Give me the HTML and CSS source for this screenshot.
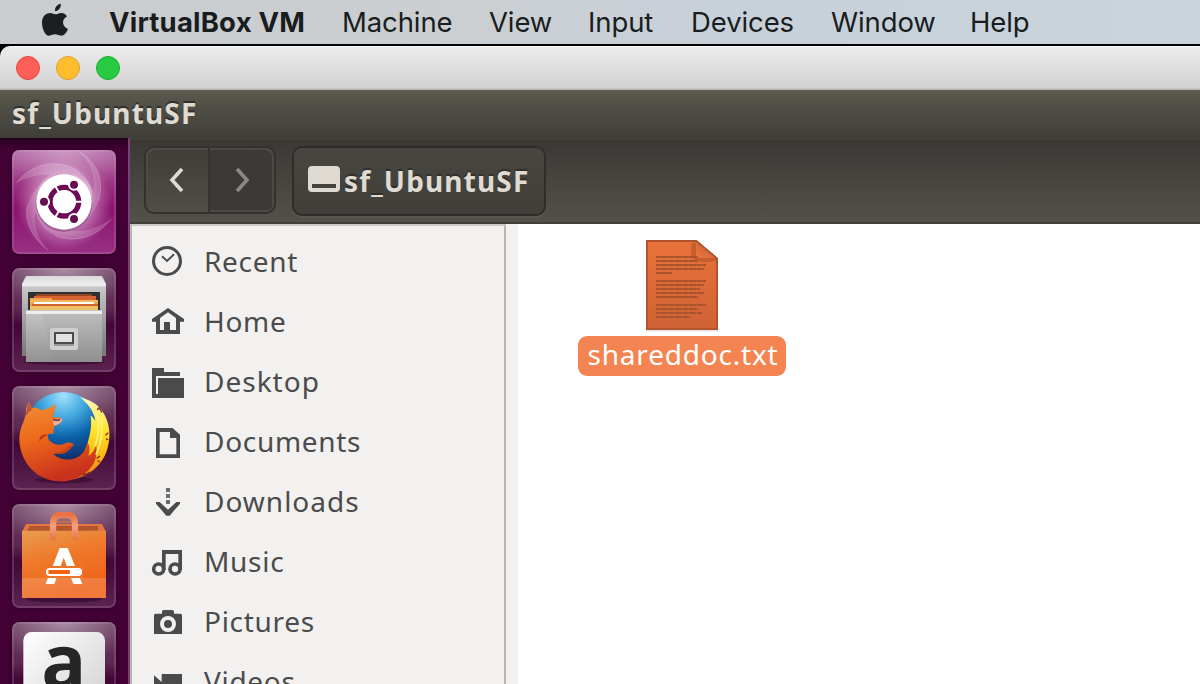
FILE: index.html
```html
<!DOCTYPE html>
<html lang="en">
<head>
<meta charset="utf-8">
<title>sf_UbuntuSF</title>
<link rel="stylesheet" href="styles.css">
</head>
<body>
<header class="menubar">
  <svg class="apple" viewBox="120 9 90 102"><path d="M165 33C164 22 171 13 182 11C184 22 176 33 165 33ZM201 49C191 55 187 63 190 73C192 80 197 84 204 87C200 98 192 107 184 107C177 107 173 103 165 103C157 103 153 107 147 107C135 107 126 85 126 68C126 50 137 39 150 39C157 39 161 43 167 43C172 43 177 38 185 39C192 39 197 43 201 49Z"/></svg>
  <span class="menu app">VirtualBox VM</span>
  <span class="menu">Machine</span>
  <span class="menu">View</span>
  <span class="menu">Input</span>
  <span class="menu">Devices</span>
  <span class="menu">Window</span>
  <span class="menu">Help</span>
</header>
<div class="vm">
  <div class="titlebar"><i class="light red"></i><i class="light amber"></i><i class="light green"></i></div>
  <div class="panel"><span class="bold-title">sf_UbuntuSF</span></div>
  <div class="desktop">
    <nav class="launcher">
      <div class="tile dash">
        <svg viewBox="36 42 312 312">
          <defs>
            <linearGradient id="sw" x1="0" y1="0" x2="1" y2="1"><stop offset="0" stop-color="#fff" stop-opacity=".1"/><stop offset="1" stop-color="#fff" stop-opacity=".36"/></linearGradient>
            <radialGradient id="halo"><stop offset=".4" stop-color="#e9c4e2" stop-opacity=".8"/><stop offset="1" stop-color="#d89acb" stop-opacity="0"/></radialGradient>
          </defs>
          <circle cx="192" cy="198" r="145" fill="url(#halo)"/>
          <path d="M50 140C100 75 185 70 235 105C270 130 280 160 276 200L110 200C105 170 120 130 150 118C115 112 80 125 50 140Z" fill="url(#sw)"/>
          <path d="M235 46C290 75 315 135 295 195C282 235 250 275 210 282L190 116C230 110 270 135 280 165C286 120 270 75 235 46Z" fill="#fff" fill-opacity=".16"/>
          <path d="M334 248C295 300 225 325 165 298C120 278 100 235 112 190L270 220C265 255 240 280 215 285C260 290 300 270 334 248Z" fill="#fff" fill-opacity=".16"/>
          <path d="M145 344C95 305 70 250 84 205C92 175 115 145 145 125L165 280C135 272 112 250 106 225C100 270 115 310 145 344Z" fill="#fff" fill-opacity=".16"/>
          <g fill="none" stroke="#efcbe8" stroke-opacity=".3" stroke-width="3"><path d="M50 140C100 75 185 70 235 105"/><path d="M235 46C290 75 315 135 295 195"/><path d="M334 248C295 300 225 325 165 298"/><path d="M145 344C95 305 70 250 84 205"/></g>
          <circle cx="192" cy="203" r="85" fill="#5b0b4f" opacity=".35"/>
          <circle cx="192" cy="198" r="83" fill="#fff"/>
          <circle cx="193" cy="197" r="43" fill="none" stroke="#6d0b55" stroke-width="16"/>
          <g stroke="#fff" stroke-width="6"><path d="M193 197L251 197M193 197L164 147M193 197L164 247"/></g>
          <circle cx="193" cy="197" r="34" fill="#fff"/>
          <g fill="#65104f" stroke="#fff" stroke-width="6"><circle cx="132" cy="197" r="15"/><circle cx="222" cy="146" r="15"/><circle cx="222" cy="249" r="15"/></g>
        </svg>
      </div>
      <div class="tile">
        <svg viewBox="36 36 312 312">
          <defs>
            <linearGradient id="cab" x1="0" y1="0" x2="0" y2="1"><stop offset="0" stop-color="#c9c9c9"/><stop offset="1" stop-color="#777"/></linearGradient>
            <linearGradient id="drawer" x1="0" y1="0" x2="0" y2="1"><stop offset="0" stop-color="#c6c6c6"/><stop offset="1" stop-color="#929292"/></linearGradient>
            <linearGradient id="lid" x1="0" y1="0" x2="0" y2="1"><stop offset="0" stop-color="#d9d9d9"/><stop offset="1" stop-color="#f2f2f2"/></linearGradient>
          </defs>
          <ellipse cx="192" cy="318" rx="120" ry="9" fill="#25001f" opacity=".45"/>
          <path d="M66 88H318V300H66Z" fill="url(#cab)"/>
          <path d="M78 60H306L318 84V91H66V84Z" fill="url(#lid)"/>
          <path d="M84 108H300V164H84Z" fill="#303030"/>
          <path d="M108 114H276V124H108Z" fill="#944623"/>
          <path d="M102 120H288V164H102Z" fill="#d76333"/>
          <path d="M90 126H156V132H294V162H90Z" fill="#eda64a"/>
          <path d="M90 132H294V138H90Z" fill="#f6b95e"/><path d="M102 138H282V144H102Z" fill="#fff"/>
          <path d="M96 144H294V150H96Z" fill="#d0622c"/><path d="M90 150H294V162H90Z" fill="#f0bd69"/>
          <path d="M78 162H306V318H78Z" fill="url(#drawer)"/><path d="M78 165H306V174H78Z" fill="#eee"/>
          <path d="M126 174L165 318H306V174Z" fill="#777" opacity=".09"/>
          <rect x="150" y="216" width="84" height="66" rx="8" fill="#cfcfcf"/>
          <rect x="162" y="228" width="60" height="36" fill="#4b4b4b"/><rect x="162" y="264" width="60" height="6" fill="#999"/>
          <rect x="168" y="234" width="48" height="24" fill="#e3e3e3"/>
        </svg>
      </div>
      <div class="tile">
        <svg viewBox="36 30 312 312">
          <defs>
            <radialGradient id="globe" cx=".5" cy=".05" r=".86"><stop offset="0" stop-color="#a2e2fb"/><stop offset=".3" stop-color="#48ace2"/><stop offset=".62" stop-color="#0a62a9"/><stop offset="1" stop-color="#15245c"/></radialGradient>
            <linearGradient id="fox" x1="0" y1="0" x2=".3" y2="1"><stop offset="0" stop-color="#f39235"/><stop offset=".5" stop-color="#ec671b"/><stop offset="1" stop-color="#c9321c"/></linearGradient>
            <linearGradient id="tail" x1="0" y1="0" x2="0" y2="1"><stop offset="0" stop-color="#fff8c0"/><stop offset=".4" stop-color="#ffe32c"/><stop offset=".7" stop-color="#fdb813"/><stop offset="1" stop-color="#ee7219"/></linearGradient>
          </defs>
          <ellipse cx="192" cy="312" rx="90" ry="10" fill="#25001f" opacity=".4"/>
          <circle cx="190" cy="166" r="118" fill="url(#globe)"/>
          <path d="M240 64C272 72 294 86 307 106C329 137 335 182 321 222C304 274 260 302 220 310C232 278 248 245 258 214C272 177 276 147 272 119C279 123 283 129 286 136C283 106 262 82 240 64Z" fill="url(#tail)"/>
          <path d="M86 77L95 97C106 92 114 95 123 103C134 99 149 98 168 84C164 98 165 111 158 124C166 123 178 123 187 128C184 141 174 146 162 151L160 174C144 172 141 176 146 191C156 202 171 209 190 205C200 198 214 197 222 207C213 211 207 216 201 222C191 232 177 233 160 234C180 253 211 256 235 242C251 233 259 217 262 199C270 210 270 227 265 240C277 232 284 221 288 206C293 229 288 254 276 270C252 304 208 319 175 316C130 314 91 288 71 246C55 212 53 172 70 139C74 127 76 120 78 112C76 100 81 89 86 77Z" fill="url(#fox)"/>
          <path d="M158 132C171 126 180 127 187 130C184 141 174 146 162 149Z" fill="#f6b49a"/>
          <path d="M160 130Q170 136 180 130" fill="none" stroke="#7b3943" stroke-width="6"/>
          <path d="M118 197C117 178 130 172 144 177C128 184 122 191 118 197Z" fill="#b83b18"/>
          <path d="M143 222C177 236 190 227 203 211L222 206C208 222 199 233 179 234Z" fill="#cc431a"/>
          <path d="M288 105C300 132 298 177 285 211M304 128C309 165 303 204 288 236" fill="none" stroke="#fff47b" stroke-width="5"/>
          <path d="M79 108L85 78L96 102C87 106 83 112 79 121Z" fill="#bd5436"/>
          <path d="M292 102l5-7 9 14M316 178l9-8M318 188l7 4M290 247l10-7M292 254l8 4M251 300l18-12M257 293l-10 3" fill="none" stroke="#84321f" stroke-width="4"/>
        </svg>
      </div>
      <div class="tile">
        <svg viewBox="36 24 312 312">
          <defs>
            <linearGradient id="bag" x1="0" y1="0" x2=".35" y2="1"><stop offset="0" stop-color="#e99c50"/><stop offset=".45" stop-color="#ef7a2c"/><stop offset="1" stop-color="#ef6116"/></linearGradient>
            <linearGradient id="handle" x1="0" y1="0" x2="0" y2="1"><stop offset="0" stop-color="#ea7345"/><stop offset=".45" stop-color="#f3a17d"/><stop offset="1" stop-color="#e8743e"/></linearGradient>
          </defs>
          <ellipse cx="192" cy="308" rx="115" ry="12" fill="#21001c" opacity=".45"/>
          <path d="M78 84H306L318 108H66Z" fill="#e57540"/><path d="M90 90H294V108H78Z" fill="#b3562f"/>
          <path d="M66 104H318V306H66Z" fill="url(#bag)"/>
          <path d="M66 246H318V306H66Z" fill="#fff" opacity=".16"/>
          <path d="M159 132V84Q161 57 180 57H204Q223 57 225 84V132" fill="none" stroke="url(#handle)" stroke-width="19"/>
          <path d="M171 78H213" stroke="#db6d43" stroke-width="5"/>
          <path d="M179 156H203L247 264H220L191 185L163 264H137Z" fill="#fff"/>
          <path d="M132 210H249V246H132Z" fill="#ee7426"/>
          <rect x="138" y="216" width="108" height="24" rx="11" fill="#fff"/><rect x="145" y="222" width="65" height="12" rx="3" fill="#f36412"/>
        </svg>
      </div>
      <div class="tile">
        <svg viewBox="36 378 312 312">
          <defs><linearGradient id="paper" x1="0" y1="0" x2="1" y2="1"><stop offset="0" stop-color="#fff"/><stop offset="1" stop-color="#cfcfcf"/></linearGradient></defs>
          <rect x="70" y="408" width="245" height="250" rx="25" fill="url(#paper)"/>
          <text class="amazon" x="124" y="578">a</text>
        </svg>
      </div>
    </nav>
    <main class="files">
      <div class="toolbar">
        <div class="history">
          <span class="back"><svg viewBox="0 0 24 28"><path d="M17 3L7 14L17 25"/></svg></span>
          <span class="forward"><svg viewBox="0 0 24 28"><path d="M7 3L17 14L7 25"/></svg></span>
        </div>
        <div class="location">
          <svg viewBox="0 0 32 26"><path fill-rule="evenodd" d="M4 0H28Q32 0 32 4V22Q32 26 28 26H4Q0 26 0 22V4Q0 0 4 0ZM4 18V22H28V18Z"/></svg>
          <span class="bold-title">sf_UbuntuSF</span>
        </div>
      </div>
      <div class="content">
        <aside class="places">
          <div class="place"><svg viewBox="75 42 108 108"><circle cx="126" cy="93" r="40.5" fill="none" stroke="#4b4b4b" stroke-width="9"/><path d="M111 79L126 93L147 73" fill="none" stroke="#4b4b4b" stroke-width="6"/></svg><span>Recent</span></div>
          <div class="place"><svg viewBox="75 222 108 108"><path fill-rule="evenodd" d="M129 234L177 267V275H165V312H93V275H81V267ZM129 247L105 264V300H117V276H135V300H153V264Z"/></svg><span>Home</span></div>
          <div class="place wide"><svg viewBox="75 402 108 108"><path d="M81 414H117V426H165V438H93V492H99V444H177V504H81Z"/></svg><span>Desktop</span></div>
          <div class="place"><svg viewBox="75 582 108 108"><path fill-rule="evenodd" d="M93 594H143L165 614V684H93ZM104 606V673H154V624H135V606Z"/></svg><span>Documents</span></div>
          <div class="place wide"><svg viewBox="75 72 108 108"><path d="M123 84H135V96H123ZM123 102H135V114H123ZM123 120H135V132H123Z" opacity=".8"/><path d="M93 126H104L129 149L154 126H165V131L134 167H124L93 131Z"/></svg><span>Downloads</span></div>
          <div class="place"><svg viewBox="75 252 108 108"><path d="M111 270H171V330H160V282H122V330H111Z"/><circle cx="101" cy="327" r="15" fill="none" stroke="#4b4b4b" stroke-width="11"/><circle cx="150" cy="327" r="15" fill="none" stroke="#4b4b4b" stroke-width="11"/></svg><span>Music</span></div>
          <div class="place"><svg viewBox="75 432 108 108"><path d="M111 455Q111 450 116 450H142Q147 450 147 455V461H166Q171 461 171 466V522H87V466Q87 461 92 461H111Z"/><circle cx="129" cy="492" r="18" fill="none" stroke="#f2f1ef" stroke-width="12"/></svg><span>Pictures</span></div>
          <div class="place"><svg viewBox="75 612 108 108"><path d="M87 646L110 666V642H171V700H110V681L87 700Z"/></svg><span>Videos</span></div>
        </aside>
        <section class="listing">
          <div class="file">
            <svg viewBox="216 48 240 300">
              <defs>
                <linearGradient id="doc" x1="0" y1="0" x2="0" y2="1"><stop offset="0" stop-color="#e9723a"/><stop offset="1" stop-color="#cf6335"/></linearGradient>
                <linearGradient id="fold" x1="0" y1="1" x2=".7" y2=".2"><stop offset="0" stop-color="#f07b42"/><stop offset="1" stop-color="#c65e32"/></linearGradient>
              </defs>
              <path d="M228 332H444" stroke="#000" stroke-opacity=".1" stroke-width="5"/>
              <path d="M231 63H378L441 116V327H231Z" fill="url(#doc)" stroke="#b3532c" stroke-width="6"/>
              <path d="M364 68H378V114H438V124Q385 132 364 112Z" fill="#944522" opacity=".4"/>
              <path d="M378 63L441 116Q409 106 378 115Q382 87 378 63Z" fill="url(#fold)"/>
              <path d="M378 62L441 115" stroke="#a95531" stroke-width="5"/>
              <path d="M258 111H384M258 123H384M258 135H408M258 147H402M258 159H306M258 183H408M258 195H402M258 207H390M258 219H402M258 231H384M258 255H408M258 267H384M258 279H396M258 291H360" stroke="#a9532c" stroke-width="6"/>
              <path d="M258 111H384M258 123H384M258 135H408M258 147H402M258 159H306M258 183H408M258 195H402M258 207H390M258 219H402M258 231H384M258 255H408M258 267H384M258 279H396M258 291H360" stroke="#bd5d32" stroke-width="6" stroke-dasharray="3 21 3 15" stroke-dashoffset="-12"/>
            </svg>
            <span class="label">shareddoc.txt</span>
          </div>
        </section>
      </div>
    </main>
  </div>
</div>
</body>
</html>
```

FILE: styles.css
```css
* { box-sizing: border-box; }
body { margin: 0; width: 1200px; height: 684px; overflow: hidden; display: flex; flex-direction: column; background: #000; font-family: "Noto Sans", sans-serif; }
svg { display: block; flex: none; }
.menubar { flex: none; height: 46px; display: grid; grid-template-columns: 69px 233px 147px 99px 103px 140px 139px 1fr; padding-left: 40px; align-items: center; border-bottom: 2px solid #000; background: linear-gradient(90deg, #cacccf, #cbcfd2 40%, #c8d0d9 60%, #c9d4dc); font: 27.5px/44px Inter, sans-serif; color: #191d20; white-space: nowrap; }
.apple { width: 30px; height: 34px; margin-bottom: 4px; fill: #1b1f21; }
.menu { letter-spacing: -0.1px; }
.menu.app { font-weight: 700; letter-spacing: 0.2px; }
.vm { flex: 1; min-height: 0; display: flex; flex-direction: column; overflow: hidden; border-top-left-radius: 10px; }
.titlebar { flex: none; height: 44px; display: flex; align-items: center; gap: 16px; padding-left: 16px; background: linear-gradient(#f6f6f6, #ebebeb 2px, #d2d2d2 42px, #b5b5b1 43px); }
.light { width: 24px; height: 24px; border-radius: 50%; border: 1px solid; }
.red { background: #ff5f57; border-color: #e2463f; }
.amber { background: #ffbd2e; border-color: #dfa023; }
.green { background: #28ca42; border-color: #1dad2b; }
.panel { flex: none; height: 48px; padding-left: 12px; background: linear-gradient(#5e5c4f, #55534a 20%, #3f3e39); }
.bold-title { display: block; margin-top: -1px; font-weight: 700; font-size: 28px; line-height: 48px; letter-spacing: 1.15px; color: #dfdbd2; text-shadow: 0 -2px #302f2b; white-space: nowrap; }
.desktop { flex: 1; min-height: 0; display: flex; }
.launcher { flex: none; width: 130px; padding: 12px 0 0 12px; display: flex; flex-direction: column; gap: 14px; border-right: 2px solid #7c4173; background: linear-gradient(#27001f, #430035 12px); }
.tile { flex: none; width: 104px; height: 104px; border-radius: 7px; background: radial-gradient(ellipse 65% 40% at 50% 0, rgba(255,255,255,.4), transparent), linear-gradient(#704365, #5c2751 40%, #410735 55%, #5c2450); box-shadow: inset 0 0 0 2px rgba(220,170,210,.2), 0 0 4px #2b0023; }
.tile.dash { background: radial-gradient(ellipse 65% 40% at 50% 0, rgba(255,255,255,.35), transparent), linear-gradient(#b266a4, #9a307f 35%, #8a136e 55%, #983184); }
.tile svg { width: 104px; height: 104px; }
.amazon { font: 700 224px "Open Sans", sans-serif; fill: #262626; }
.files { flex: 1; min-width: 0; display: flex; flex-direction: column; }
.toolbar { flex: none; height: 86px; display: flex; align-items: flex-start; gap: 16px; padding: 8px 0 0 14px; border-bottom: 2px solid #403f3a; background: linear-gradient(#403f3a 2px, #393833 2px, #3b3a36 6px, #53514a); }
.history { width: 132px; height: 68px; display: flex; overflow: hidden; border: 2px solid #33322e; border-radius: 10px; box-shadow: inset 0 0 0 2px #4c4b45; }
.history span { display: flex; align-items: center; justify-content: center; }
.history svg { width: 24px; height: 28px; fill: none; stroke-width: 3.6; }
.back { width: 62px; background: linear-gradient(#3e3d38, #504e47); stroke: #dfdbd2; box-shadow: inset 2px 2px #4c4b45; border-radius: 8px 0 0 8px; }
.forward { flex: 1; padding-right: 1px; background: #3b3a36; stroke: #8b8982; box-shadow: inset -2px 2px #4b4a44, inset 0 -2px #4b4a44; border-left: 2px solid #34332f; border-radius: 0 8px 8px 0; }
.location { width: 254px; height: 70px; display: flex; align-items: center; gap: 4px; padding-left: 14px; border: 2px solid #2e2d29; border-radius: 10px; background: linear-gradient(#484640, #403f3a); box-shadow: 0 2px #59574f; }
.location svg { width: 32px; height: 26px; fill: #dfdbd2; margin-bottom: 4px; }
.location .bold-title { margin-top: 0; }
.content { flex: 1; min-height: 0; display: flex; background: #f2f1f0; }
.places { flex: none; width: 376px; padding-top: 6px; border: 2px solid #b8b6ae; border-top-color: #ccc9c5; border-bottom: 0; background: #f2f1ef; overflow: hidden; }
.place { height: 60px; display: flex; align-items: center; gap: 18px; padding-left: 18px; font-size: 28px; line-height: 58px; letter-spacing: 0.7px; color: #4b4b4b; white-space: nowrap; }
.place span { height: 60px; }
.place.wide { letter-spacing: 1px; }
.place svg { width: 36px; height: 36px; fill: #4b4b4b; }
.listing { flex: 1; margin-left: 12px; padding: 12px 0 0 60px; background: #fff; }
.file { width: 208px; display: flex; flex-direction: column; align-items: center; }
.file svg { width: 80px; height: 100px; }
.label { width: 208px; height: 40px; border-radius: 9px; background: #f48452; color: #fff; font-size: 28px; line-height: 37px; letter-spacing: 0.8px; text-indent: 2px; text-align: center; white-space: nowrap; }
```
